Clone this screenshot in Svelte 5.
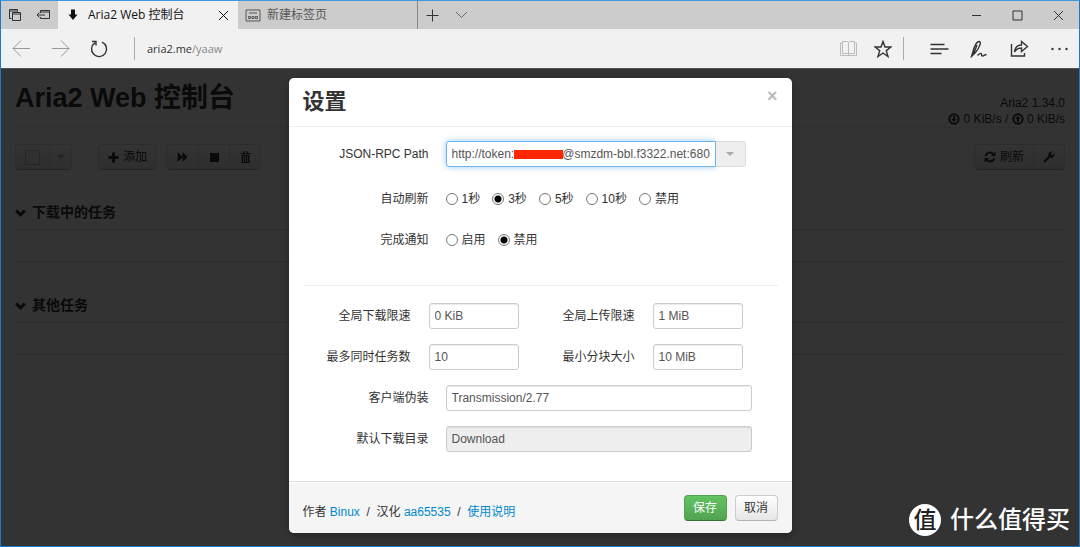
<script lang="ts">
	let rpcPath: string = $state('http://token:xxxxxxxx@smzdm-bbl.f3322.net:680');
	let refresh: string = $state('3');
	let notify: string = $state('off');
	let userAgent: string = $state('Transmission/2.77');

	const refreshOptions = [
		{ value: '1', label: '1秒' },
		{ value: '3', label: '3秒' },
		{ value: '5', label: '5秒' },
		{ value: '10', label: '10秒' },
		{ value: '0', label: '禁用' }
	];

	const notifyOptions = [
		{ value: 'on', label: '启用' },
		{ value: 'off', label: '禁用' }
	];

	const limits = $state([
		{ id: 'download-limit', label: '全局下载限速', value: '0 KiB' },
		{ id: 'upload-limit', label: '全局上传限速', value: '1 MiB' },
		{ id: 'max-tasks', label: '最多同时任务数', value: '10' },
		{ id: 'split-size', label: '最小分块大小', value: '10 MiB' }
	]);

	const sections = ['下载中的任务', '其他任务'];
</script>

<div class="window">
	<header class="tabs">
		<div class="tab-tools">
			<button aria-label="Tabs set aside">
				<svg width="14" height="14" viewBox="0 0 14 14"><path d="M3.5 10.5h-2v-9h8v2M1.5 3h8M4.5 4.5h8v8h-8zM4.5 6h8" /></svg>
			</button>
			<button aria-label="Set tabs aside">
				<svg width="15" height="12" viewBox="0 0 15 12"><path d="M4.5 4V1.500h9v8h-9V8M4.500 3h9M1 6h8M3.500 3.500L1 6l2.500 2.500" /></svg>
			</button>
		</div>
		<div class="tab active">
			<svg class="solid" width="10" height="12" viewBox="0 0 10 12"><path d="M3 0.500h4v5h2.500L5 11 0.500 5.500H3z" /></svg>
			<span>Aria2 Web 控制台</span>
			<button class="tab-close" aria-label="Close tab">
				<svg width="11" height="11" viewBox="0 0 11 11"><path d="M1 1l9 9M10 1l-9 9" /></svg>
			</button>
		</div>
		<div class="tab">
			<svg width="16" height="13" viewBox="0 0 16 13"><path d="M1 1h14v11H1zM4 4h8M3.500 7.500h2v2h-2zM7 7.500h2v2H7zM10.500 7.500h2v2h-2z" /></svg>
			<span>新建标签页</span>
		</div>
		<button class="tab-button" aria-label="New tab">
			<svg width="13" height="13" viewBox="0 0 13 13"><path d="M6.500 0.500v12M0.500 6.500h12" /></svg>
		</button>
		<button class="tab-button thin" aria-label="Tab previews">
			<svg width="13" height="8" viewBox="0 0 13 8"><path d="M1 1l5.500 5.500L12 1" /></svg>
		</button>
		<div class="window-buttons">
			<button aria-label="Minimize"><svg width="11" height="11" viewBox="0 0 11 11"><path d="M1 5.500h9" /></svg></button>
			<button aria-label="Maximize"><svg width="11" height="11" viewBox="0 0 11 11"><path d="M1 1h9v9H1z" /></svg></button>
			<button aria-label="Close"><svg width="11" height="11" viewBox="0 0 11 11"><path d="M1 1l9 9M10 1l-9 9" /></svg></button>
		</div>
	</header>

	<nav class="address-bar">
		<button class="dim" aria-label="Back"><svg width="19" height="17" viewBox="0 0 19 17"><path d="M18 8.500H1M9 0.500l-8 8 8 8" /></svg></button>
		<button class="dim" aria-label="Forward"><svg width="19" height="17" viewBox="0 0 19 17"><path d="M1 8.500h17M10 0.500l8 8-8 8" /></svg></button>
		<button class="strong" aria-label="Refresh"><svg width="19" height="18" viewBox="0 0 19 18"><path d="M12 2.200A7.500 7.500 0 1 1 5 2.800M2 1.500h4v4" /></svg></button>
		<span class="divider"></span>
		<span class="url">aria2.me<i>/yaaw</i></span>
		<div class="page-tools">
			<button class="faint" aria-label="Reading view"><svg width="19" height="17" viewBox="0 0 19 17"><path d="M3.500 1.500h5l1 1 1-1h5v12h-5l-1 1-1-1h-5zM9.500 2.500v12M3.500 3H1.500v12.500h16V3h-2" /></svg></button>
			<button class="strong" aria-label="Add to favorites"><svg width="18" height="18" viewBox="0 0 18 18"><path d="M9 1.500l2 5.500h6l-4.700 3.600L14 16.500 9 13l-5 3.500 1.700-5.900L1 7h6z" /></svg></button>
			<span class="divider"></span>
			<button class="wide strong" aria-label="Hub"><svg width="19" height="12" viewBox="0 0 19 12"><path d="M0.500 1.500h14M0.500 6h18M0.500 10.500h11" /></svg></button>
			<button class="wide strong" aria-label="Make a web note"><svg width="18" height="18" viewBox="0 0 18 18"><path d="M1.500 16.500l1.500-5C4 7 6.500 1.500 9 1.500s1 4-1 7.500c-1.500 2.700-3.500 5-6.500 7.500zM7 5L3.500 14M7.500 15.500c2-2 3.500-2.500 4-1.500s-.5 2 1 2 2-1.500 4-1.500" /></svg></button>
			<button class="wide strong" aria-label="Share"><svg width="19" height="17" viewBox="0 0 19 17"><path d="M1.500 4v12h13v-3M4.500 12c.5-4.500 3-7 7-7V1.500l6 5-6 5V8c-3.500 0-5.500 1-7 4z" /></svg></button>
			<button class="wide solid" aria-label="More"><svg width="17" height="4" viewBox="0 0 17 4"><circle cx="1.500" cy="2" r="1.200" /><circle cx="8.500" cy="2" r="1.200" /><circle cx="15.500" cy="2" r="1.200" /></svg></button>
		</div>
	</nav>

	<div class="viewport">
		<main class="page">
			<div class="page-header">
				<h1>Aria2 Web 控制台</h1>
				<div class="status">
					<div>Aria2 1.34.0</div>
					<div>
						<svg width="12" height="12" viewBox="0 0 12 12"><circle cx="6" cy="6" r="4.700" class="ring" /><path d="M5 3h2v3h2L6 9 3 6h2z" /></svg>
						0 KiB/s /
						<svg width="12" height="12" viewBox="0 0 12 12"><circle cx="6" cy="6" r="4.700" class="ring" /><path d="M5 9h2V6h2L6 3 3 6h2z" /></svg>
						0 KiB/s
					</div>
				</div>
			</div>

			<div class="toolbar">
				<div class="group select-group">
					<button aria-label="全选"><span class="square"></span></button>
					<button aria-label="选择菜单"><span class="caret"></span></button>
				</div>
				<div class="group add-group">
					<button>
						<svg width="11" height="11" viewBox="0 0 11 11"><path d="M4 0.500h3V4h3.500v3H7v3.500H4V7H0.500V4H4z" /></svg>
						添加
					</button>
				</div>
				<div class="group action-group">
					<button aria-label="开始"><svg width="11" height="10" viewBox="0 0 11 10"><path d="M0.500 0L5.500 4.500V0l5 5-5 5V5.500L0.500 10z" /></svg></button>
					<button aria-label="停止"><svg width="9" height="9" viewBox="0 0 9 9"><path d="M0 0h9v9H0z" /></svg></button>
					<button aria-label="删除"><svg width="11" height="12" viewBox="0 0 11 12"><path fill-rule="evenodd" d="M0.500 2H3V0.500h5V2h2.500v1.200H0.500zM4 1.300V2h3v-.700zM1.500 4h8v8h-8zM3 5v6h.700V5zM5.100 5v6h.800V5zM7.300 5v6H8V5z" /></svg></button>
				</div>
				<div class="group right-group">
					<button>
						<svg width="12" height="12" viewBox="0 0 12 12"><path class="stroke" d="M1.500 5A4.600 4.600 0 0 1 9.300 3M10.500 7A4.600 4.600 0 0 1 2.700 9" /><path d="M11.500 0.500v4.500H7zM0.500 11.500V7H5z" /></svg>
						刷新
					</button>
					<button aria-label="设置"><svg width="12" height="12" viewBox="0 0 12 12"><path d="M1 9.500L5.500 5A3.300 3.300 0 0 1 9.700.700L7.800 2.600l.3 1.300 1.300.3 1.900-1.900A3.300 3.300 0 0 1 7 6.500L2.500 11A1 1 0 0 1 1 9.500z" /></svg></button>
				</div>
			</div>

			{#each sections as title}
				<section class="tasks">
					<h2>
						<svg width="11" height="8" viewBox="0 0 11 8"><path class="stroke" d="M1.200 1.500l4.300 4.300 4.300-4.300" /></svg>
						{title}
					</h2>
					<div class="empty"></div>
				</section>
			{/each}
		</main>

		<div class="backdrop">
			<div class="modal" role="dialog" aria-labelledby="modal-title">
				<div class="modal-header">
					<h3 id="modal-title">设置</h3>
					<button class="close" aria-label="关闭">×</button>
				</div>

				<form class="modal-body">
					<div class="row">
						<label for="rpc-path">JSON-RPC Path</label>
						<div class="path-field">
							<input id="rpc-path" class="focused" type="text" bind:value={rpcPath} />
							<span class="redacted"></span>
							<button type="button" class="history" aria-label="历史"><span class="caret"></span></button>
						</div>
					</div>
					<div class="row refresh-row" role="radiogroup" aria-labelledby="refresh-label">
						<span class="label" id="refresh-label">自动刷新</span>
						<div class="radios">
							{#each refreshOptions as option}
								<label><input type="radio" name="refresh" value={option.value} bind:group={refresh} />{option.label}</label>
							{/each}
						</div>
					</div>
					<div class="row" role="radiogroup" aria-labelledby="notify-label">
						<span class="label" id="notify-label">完成通知</span>
						<div class="radios">
							{#each notifyOptions as option}
								<label><input type="radio" name="notify" value={option.value} bind:group={notify} />{option.label}</label>
							{/each}
						</div>
					</div>

					<hr />

					<div class="limits">
						{#each limits as limit}
							<div class="limit">
								<label for={limit.id}>{limit.label}</label>
								<input id={limit.id} type="text" bind:value={limit.value} />
							</div>
						{/each}
					</div>
					<div class="row">
						<label for="user-agent">客户端伪装</label>
						<input id="user-agent" class="long" type="text" bind:value={userAgent} />
					</div>
					<div class="row">
						<label for="directory">默认下载目录</label>
						<input id="directory" class="long" type="text" value="Download" disabled />
					</div>
				</form>

				<div class="modal-footer">
					<p>
						作者 <a href="#binux">Binux</a>&nbsp; / &nbsp;汉化 <a href="#aa65535">aa65535</a>&nbsp; / &nbsp;<a href="#usage">使用说明</a>
					</p>
					<button class="btn primary">保存</button>
					<button class="btn">取消</button>
				</div>
			</div>
		</div>

		<div class="watermark">
			<span class="badge">值</span>
			<span>什么值得买</span>
		</div>
	</div>
</div>

<style>
	:global(body) {
		margin: 0;
	}

	.window {
		display: flex;
		flex-direction: column;
		box-sizing: border-box;
		min-height: 100vh;
		border: 1px solid #1979ca;
		border-top-color: #4296dc;
		background: #f1f1f1;
		color: #333;
		font-family: 'Liberation Sans', Arial, 'Noto Sans CJK SC', sans-serif;
		font-size: 12px;
		line-height: 18px;
	}

	button,
	input {
		box-sizing: border-box;
		margin: 0;
		font: inherit;
		color: inherit;
	}

	button {
		display: flex;
		align-items: center;
		justify-content: center;
		padding: 0;
		border: 0;
		background: none;
	}

	svg {
		flex: none;
		fill: none;
		stroke: currentColor;
	}

	.solid,
	.solid svg {
		fill: currentColor;
		stroke: none;
	}

	/* tab strip */
	.tabs {
		display: flex;
		height: 28px;
		background: #ccc;
		font-family: 'Open Sans', 'Noto Sans CJK SC', sans-serif;
	}

	.tab-tools {
		display: flex;
		width: 57px;
	}

	.tab-tools button {
		width: 29px;
	}

	.tab {
		display: flex;
		align-items: center;
		gap: 6px;
		box-sizing: border-box;
		width: 180px;
		padding: 0 9px 0 7px;
		color: #555;
		border-right: 1px solid #888;
	}

	.tab.active {
		gap: 10px;
		padding-left: 10px;
		border: 0;
		background: #f1f1f1;
		color: #111;
	}

	.tab-close {
		margin-left: auto;
	}

	.tab-button {
		width: 29px;
	}

	.thin {
		color: #666;
	}

	.window-buttons {
		display: flex;
		margin-left: auto;
	}

	.window-buttons button {
		width: 41px;
	}

	/* address bar */
	.address-bar {
		display: flex;
		align-items: center;
		height: 40px;
		border-bottom: 1px solid #555;
		box-sizing: border-box;
		font-family: 'Open Sans', 'Noto Sans CJK SC', sans-serif;
		font-size: 11px;
	}

	.address-bar button {
		width: 39px;
	}

	.address-bar button:first-child {
		width: 40px;
	}

	.dim {
		color: #999;
	}

	.address-bar .faint {
		width: 29px;
		color: #bbb;
	}

	.page-tools .strong:not(.wide) {
		width: 29px;
	}

	.strong svg {
		stroke-width: 1.4;
	}

	.divider {
		width: 1px;
		height: 23px;
		margin: 0 12px 0 15px;
		background: #aaa;
	}

	.url i {
		color: #888;
		font-style: normal;
	}

	.page-tools {
		display: flex;
		align-items: center;
		margin-left: auto;
	}

	.page-tools .divider {
		margin: 0 15px 0 6px;
	}

	.address-bar .wide {
		width: 40px;
	}

	/* page under the dialog */
	.viewport {
		position: relative;
		display: flex;
		flex: 1;
		background: #fff;
	}

	.page {
		flex: 1;
		padding: 0 14px;
	}

	.page svg {
		fill: currentColor;
		stroke: none;
	}

	.page svg .ring,
	.page svg .stroke {
		fill: none;
		stroke: currentColor;
		stroke-width: 2;
	}

	.page-header {
		display: flex;
		align-items: center;
		justify-content: space-between;
		height: 58px;
		border-bottom: 1px solid #eee;
	}

	h1 {
		margin: 0;
		font-size: 27px;
		line-height: 36px;
	}

	.status {
		padding-top: 26px;
		line-height: 16px;
		text-align: right;
	}

	.status svg {
		vertical-align: -2px;
	}

	.toolbar {
		display: flex;
		margin-top: 16px;
	}

	.group {
		display: flex;
		box-sizing: border-box;
		height: 26px;
		border: 1px solid #bbb;
		border-color: #ddd #ddd #b3b3b3;
		border-radius: 4px;
		background: linear-gradient(#fff, #e6e6e6);
	}

	.group button {
		gap: 4px;
		min-width: 31px;
		padding: 0 9px;
	}

	.group button + button {
		border-left: 1px solid #ddd;
	}

	.select-group button {
		min-width: 22px;
		padding: 0 5px;
	}

	.select-group button:first-child {
		width: 33px;
	}

	.add-group {
		margin-left: 26px;
	}

	.action-group {
		margin-left: 9px;
	}

	.right-group {
		margin-left: auto;
	}

	.square {
		width: 13px;
		height: 13px;
		border: 1px solid #bbb;
	}

	.caret {
		border: 4px solid transparent;
		border-top-color: #aaa;
		border-bottom: 0;
	}

	.tasks {
		margin-top: 31px;
	}

	.tasks h2 {
		margin: 0;
		padding-bottom: 4px;
		border-bottom: 1px solid #ddd;
		font-size: 14px;
		line-height: 25px;
	}

	.toolbar + .tasks {
		margin-top: 30px;
	}

	.tasks h2 svg {
		margin-right: 2px;
	}

	.tasks h2 svg .stroke {
		stroke-width: 3;
	}

	.empty {
		height: 31px;
		border-bottom: 1px solid #ddd;
	}

	/* dialog */
	.backdrop {
		position: absolute;
		inset: 0;
		display: flex;
		align-items: flex-start;
		justify-content: center;
		padding-top: 9px;
		background: rgba(0, 0, 0, 0.8);
	}

	.modal {
		width: 503px;
		border-radius: 5px;
		background: #fff;
		box-shadow: 0 3px 7px rgba(0, 0, 0, 0.3);
		overflow: hidden;
	}

	.modal-header {
		display: flex;
		align-items: center;
		justify-content: space-between;
		height: 48px;
		padding: 0 14px;
		border-bottom: 1px solid #eee;
	}

	h3 {
		margin: 0;
		font-size: 22px;
		line-height: 32px;
	}

	.close {
		height: 18px;
		margin-bottom: 12px;
		color: #bbb;
		font-size: 18px;
		font-weight: bold;
	}

	.modal-body {
		padding: 14px 14px 29px;
	}

	.row {
		display: flex;
		align-items: center;
		gap: 17px;
		min-height: 25px;
		margin-bottom: 16px;
	}

	.row:last-child {
		margin-bottom: 0;
	}

	.refresh-row {
		margin-top: 19px;
	}

	.row > label,
	.row > .label {
		width: 126px;
		text-align: right;
	}

	input[type='text'] {
		height: 26px;
		padding: 0 5px;
		border: 1px solid #ccc;
		border-radius: 3px;
		background: #fff;
		box-shadow: inset 0 1px 1px rgba(0, 0, 0, 0.08);
		color: #555;
		outline: none;
	}

	input[type='text']:disabled {
		background: #eee;
	}

	.path-field {
		position: relative;
		display: flex;
		width: 300px;
	}

	.path-field .focused {
		flex: 1;
		min-width: 0;
		border-color: #6fb5ec;
		border-radius: 3px 0 0 3px;
		box-shadow: 0 0 6px rgba(82, 168, 236, 0.6);
	}

	/* hides the secret token inside the address */
	.redacted {
		position: absolute;
		top: 9px;
		left: 68px;
		width: 49px;
		height: 9px;
		background: #ff2600;
	}

	.history {
		width: 30px;
		border: 1px solid #ddd;
		border-left: 0;
		border-radius: 0 4px 4px 0;
		background: #eee;
	}

	.radios {
		display: flex;
		gap: 12px;
	}

	.radios label {
		display: flex;
		align-items: center;
		gap: 4px;
	}

	input[type='radio'] {
		width: 12px;
		height: 12px;
		border: 1px solid #777;
		border-radius: 50%;
		background: #fff;
		appearance: none;
	}

	input[type='radio']:checked {
		background: radial-gradient(#000 3px, #fff 4px);
	}

	hr {
		margin: 33px 0 17px;
		border: 0;
		border-top: 1px solid #eee;
	}

	.limits {
		display: flex;
		flex-wrap: wrap;
		gap: 15px 8px;
		margin-bottom: 15px;
	}

	.limits + .row {
		margin-bottom: 15px;
	}

	.limit {
		display: flex;
		align-items: center;
		gap: 18px;
	}

	.limit label {
		width: 108px;
		text-align: right;
	}

	.limit input {
		width: 90px;
	}

	.long {
		width: 306px;
	}

	.modal-footer {
		display: flex;
		align-items: center;
		gap: 8px;
		padding: 13px 14px 12px;
		border-top: 1px solid #ddd;
		background: #f5f5f5;
		box-shadow: inset 0 1px 0 #fff;
	}

	.modal-footer p {
		margin: 8px auto 0 0;
	}

	.modal-footer a {
		color: #08c;
		text-decoration: none;
	}

	.btn {
		width: 43px;
		height: 26px;
		border: 1px solid #ccc;
		border-bottom-color: #b3b3b3;
		border-radius: 4px;
		background: linear-gradient(#fff, #e6e6e6);
	}

	.btn.primary {
		border-color: #51a351 #51a351 #387038;
		background: linear-gradient(#62c462, #51a351);
		color: #fff;
	}

	.watermark {
		position: absolute;
		right: 9px;
		bottom: 10px;
		display: flex;
		align-items: center;
		gap: 9px;
		color: #fff;
		font-size: 24px;
		font-weight: 500;
		line-height: 32px;
	}

	.badge {
		width: 32px;
		height: 32px;
		border-radius: 50%;
		background: #fff;
		color: #222;
		font-size: 23px;
		text-align: center;
	}
</style>
